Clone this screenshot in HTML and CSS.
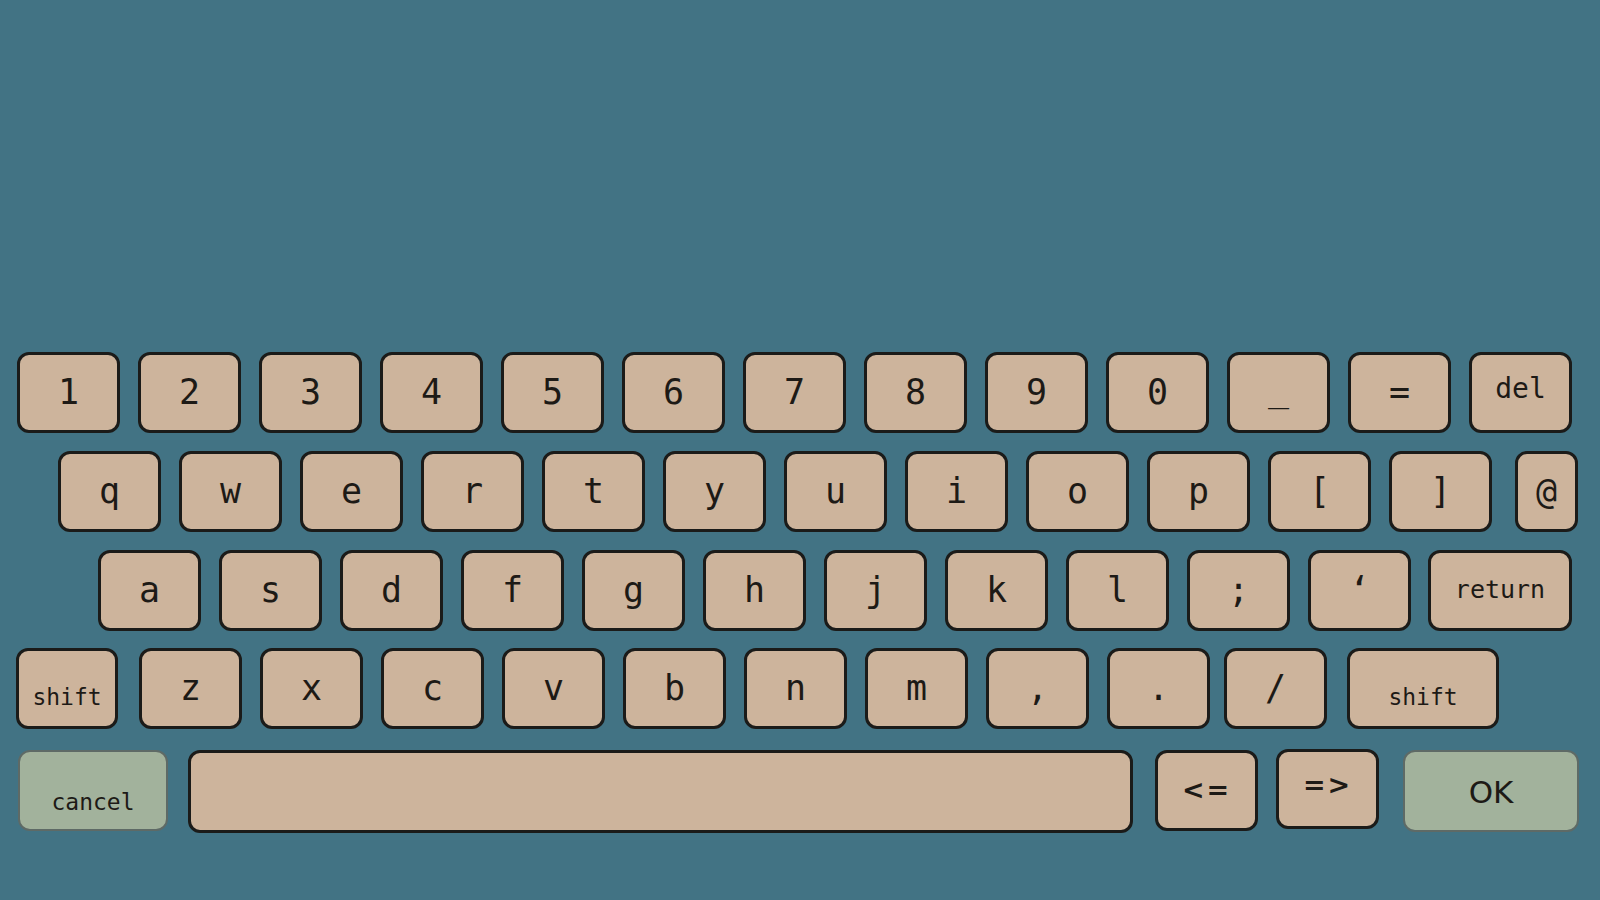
FILE: index.html
```html
<!DOCTYPE html>
<html>
<head>
<meta charset="utf-8">
<link rel="stylesheet" href="styles.css">
</head>
<body>
<div class="keyboard">
  <div class="row row1">
    <div class="key">1</div><div class="key">2</div><div class="key">3</div><div class="key">4</div>
    <div class="key">5</div><div class="key">6</div><div class="key">7</div><div class="key">8</div>
    <div class="key">9</div><div class="key">0</div><div class="key under">_</div><div class="key">=</div>
    <div class="key word del">del</div>
  </div>
  <div class="row row2">
    <div class="key">q</div><div class="key">w</div><div class="key">e</div><div class="key">r</div>
    <div class="key">t</div><div class="key">y</div><div class="key">u</div><div class="key">i</div>
    <div class="key">o</div><div class="key">p</div><div class="key">[</div><div class="key">]</div>
    <div class="key at">@</div>
  </div>
  <div class="row row3">
    <div class="key">a</div><div class="key">s</div><div class="key">d</div><div class="key">f</div>
    <div class="key">g</div><div class="key">h</div><div class="key">j</div><div class="key">k</div>
    <div class="key">l</div><div class="key">;</div><div class="key">‘</div>
    <div class="key word return">return</div>
  </div>
  <div class="row row4">
    <div class="key word small low shift-l">shift</div>
    <div class="key">z</div><div class="key">x</div><div class="key">c</div><div class="key">v</div>
    <div class="key">b</div><div class="key">n</div><div class="key">m</div><div class="key">,</div>
    <div class="key">.</div><div class="key slash">/</div>
    <div class="key word small low shift-r">shift</div>
  </div>
  <div class="row row5">
    <div class="key green word small low cancel">cancel</div>
    <div class="key space"></div>
    <div class="key sans arrow left">&lt;=</div>
    <div class="key sans arrow right">=&gt;</div>
    <div class="key green sans ok">OK</div>
  </div>
</div>
</body>
</html>
```

FILE: styles.css
```css
* { box-sizing: border-box; }

html, body {
  margin: 0;
  padding: 0;
  width: 1600px;
  height: 900px;
  background: #427384;
  overflow: hidden;
}

.keyboard {
  display: flex;
  flex-direction: column;
  padding-top: 352px;
}

.row {
  display: flex;
  gap: 18px;
  height: 81px;
}

.row1 { padding-left: 17px; }
.row2 { padding-left: 58px; margin-top: 18px; }
.row3 { padding-left: 98px; margin-top: 18px; }
.row4 { padding-left: 16px; margin-top: 17px; }
.row5 { padding-left: 18px; margin-top: 21px; }

.key {
  width: 103px;
  height: 81px;
  flex: none;
  background: #cdb49c;
  border: 3px solid #1b1b19;
  border-radius: 12px;
  display: flex;
  align-items: center;
  justify-content: center;
  font-family: "DejaVu Sans Mono", "Liberation Mono", monospace;
  font-size: 35px;
  color: #1d1a16;
  padding-bottom: 2px;
}

.under { padding-bottom: 8px; }
.word { font-size: 25px; }
.del { font-size: 28px; padding-bottom: 8px; }
.small { font-size: 23px; }
.low {
  align-items: flex-end;
  padding-bottom: 16px;
}

.at { width: 63px; margin-left: 5px; }
.return { width: 144px; margin-left: -1px; }

.shift-l { width: 102px; margin-right: 3px; }
.slash { margin-left: -4px; }
.shift-r { width: 152px; margin-left: 2px; }

.green {
  background: #a2b29c;
  border: 2px solid #5e6a66;
}

.cancel { width: 150px; margin-right: 2px; padding-bottom: 14px; }
.space { width: 945px; height: 83px; margin-right: 4px; }

.sans {
  font-family: "DejaVu Sans", "Liberation Sans", sans-serif;
}

.arrow { font-size: 27px; font-weight: bold; letter-spacing: 2px; }
.arrow.left { height: 81px; }
.arrow.right { margin-top: -1px; height: 80px; padding-bottom: 10px; }

.ok {
  width: 176px;
  height: 82px;
  margin-left: 6px;
  font-size: 31px;
  padding-top: 4px;
}
```
